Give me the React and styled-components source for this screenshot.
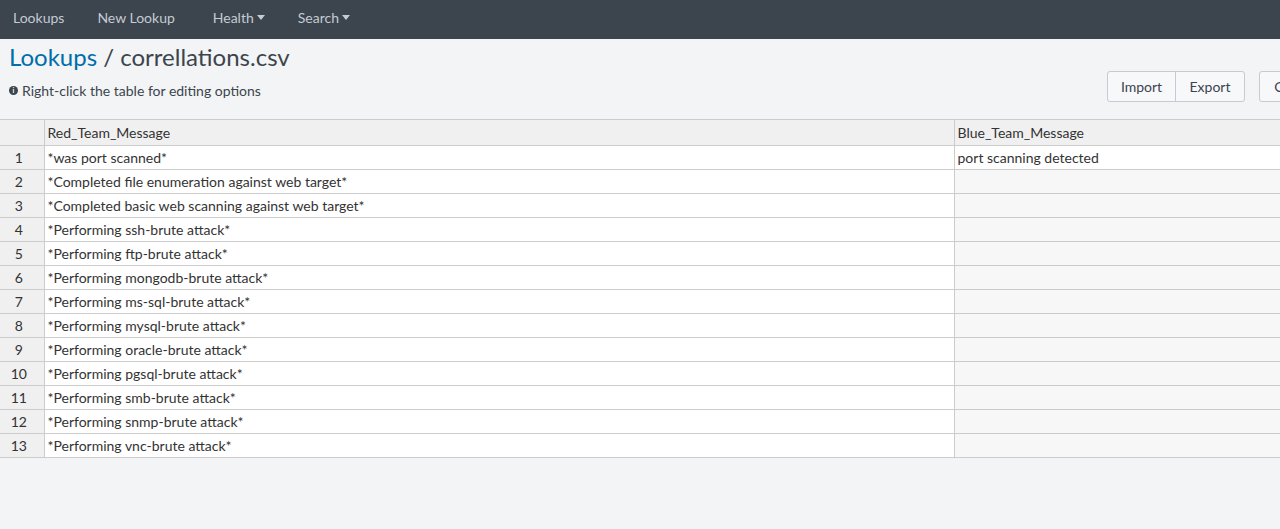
import styled, { createGlobalStyle } from "styled-components";

const GlobalStyle = createGlobalStyle`
  body {
    margin: 0;
    background: #f2f4f5;
    font-family: Lato, "Liberation Sans", sans-serif;
    color: #3c444d;
  }
`;

const Page = styled.div`
  width: 1280px;
  height: 529px;
  overflow: hidden;
  background: #f2f4f5;
`;

const Nav = styled.div`
  height: 39px;
  box-sizing: border-box;
  background: #3c444d;
  display: flex;
  align-items: center;
  padding: 0 0 5px 13px;
`;

const NavItem = styled.div`
  color: #c3cbd4;
  font-size: 14px;
  margin-right: ${(p) => p.$gap}px;
  display: flex;
  align-items: center;
  gap: 3px;
`;

const Caret = styled.span`
  width: 0;
  height: 0;
  border-left: 4px solid transparent;
  border-right: 4px solid transparent;
  border-top: 5px solid #c3cbd4;
`;

const Header = styled.div`
  display: flex;
  justify-content: space-between;
  align-items: flex-end;
  padding: 3px 0 20px 9px;
`;

const TitleBlock = styled.div`
  display: flex;
  flex-direction: column;
`;

const Title = styled.h1`
  margin: 0;
  font-size: 24px;
  font-weight: 400;
  color: #3c444d;
  line-height: 30px;
`;

const Crumb = styled.span`
  color: #006eaa;
`;

const Info = styled.div`
  margin-top: 10px;
  font-size: 14px;
  line-height: 17px;
  display: flex;
  align-items: center;
  gap: 4px;
  color: #3c444d;
`;

const InfoIcon = styled.span`
  width: 9px;
  height: 9px;
  border-radius: 50%;
  background: #3c444d;
  color: #fff;
  font-size: 7px;
  font-weight: 700;
  display: flex;
  align-items: center;
  justify-content: center;
  line-height: 1;
`;

const Actions = styled.div`
  display: flex;
  gap: 14px;
  margin-right: -51px;
  margin-bottom: -3px;
`;

const Group = styled.div`
  display: flex;
  border: 1px solid #c3cbd4;
  border-radius: 3px;
  overflow: hidden;
  background: #f7f8fa;
`;

const Btn = styled.div`
  height: 29px;
  width: ${(p) => p.$w}px;
  display: flex;
  align-items: center;
  justify-content: center;
  font-size: 14px;
  color: #3c444d;
  & + & {
    border-left: 1px solid #c3cbd4;
  }
`;

const TableWrap = styled.div`
  width: 1280px;
  overflow: hidden;
`;

const Table = styled.table`
  border-collapse: collapse;
  table-layout: fixed;
  width: 1400px;
  font-size: 14px;
  color: #333;
`;

const Th = styled.th`
  height: 25px;
  background: #f0f0f0;
  border: 1px solid #ccc;
  font-weight: 400;
  text-align: left;
  padding: 0 3px;
  &:first-child {
    border-left: none;
  }
`;

const Td = styled.td`
  height: 23px;
  border: 1px solid #ccc;
  padding: 0 3px;
  background: ${(p) => (p.$empty ? "#f7f7f7" : "#fff")};
  white-space: nowrap;
`;

const RowNum = styled.td`
  height: 23px;
  border: 1px solid #ccc;
  border-left: none;
  background: #f0f0f0;
  text-align: center;
  padding: 0 6px 0 0;
`;

const rows = [
  ["*was port scanned*", "port scanning detected"],
  ["*Completed file enumeration against web target*", ""],
  ["*Completed basic web scanning against web target*", ""],
  ["*Performing ssh-brute attack*", ""],
  ["*Performing ftp-brute attack*", ""],
  ["*Performing mongodb-brute attack*", ""],
  ["*Performing ms-sql-brute attack*", ""],
  ["*Performing mysql-brute attack*", ""],
  ["*Performing oracle-brute attack*", ""],
  ["*Performing pgsql-brute attack*", ""],
  ["*Performing smb-brute attack*", ""],
  ["*Performing snmp-brute attack*", ""],
  ["*Performing vnc-brute attack*", ""],
];

export default function App() {
  return (
    <Page>
      <GlobalStyle />
      <Nav>
        <NavItem $gap={33}>Lookups</NavItem>
        <NavItem $gap={38}>New Lookup</NavItem>
        <NavItem $gap={33}>
          Health <Caret />
        </NavItem>
        <NavItem $gap={0}>
          Search <Caret />
        </NavItem>
      </Nav>
      <Header>
        <TitleBlock>
          <Title>
            <Crumb>Lookups</Crumb> / correllations.csv
          </Title>
          <Info>
            <InfoIcon>i</InfoIcon>
            Right-click the table for editing options
          </Info>
        </TitleBlock>
        <Actions>
          <Group>
            <Btn $w={67}>Import</Btn>
            <Btn $w={68}>Export</Btn>
          </Group>
          <Group>
            <Btn $w={70}>Cancel</Btn>
          </Group>
        </Actions>
      </Header>
      <TableWrap>
        <Table>
          <colgroup>
            <col style={{ width: 44 }} />
            <col style={{ width: 910 }} />
            <col style={{ width: 446 }} />
          </colgroup>
          <thead>
            <tr>
              <Th />
              <Th>Red_Team_Message</Th>
              <Th>Blue_Team_Message</Th>
            </tr>
          </thead>
          <tbody>
            {rows.map(([red, blue], i) => (
              <tr key={i}>
                <RowNum>{i + 1}</RowNum>
                <Td>{red}</Td>
                <Td $empty={!blue}>{blue}</Td>
              </tr>
            ))}
          </tbody>
        </Table>
      </TableWrap>
    </Page>
  );
}
